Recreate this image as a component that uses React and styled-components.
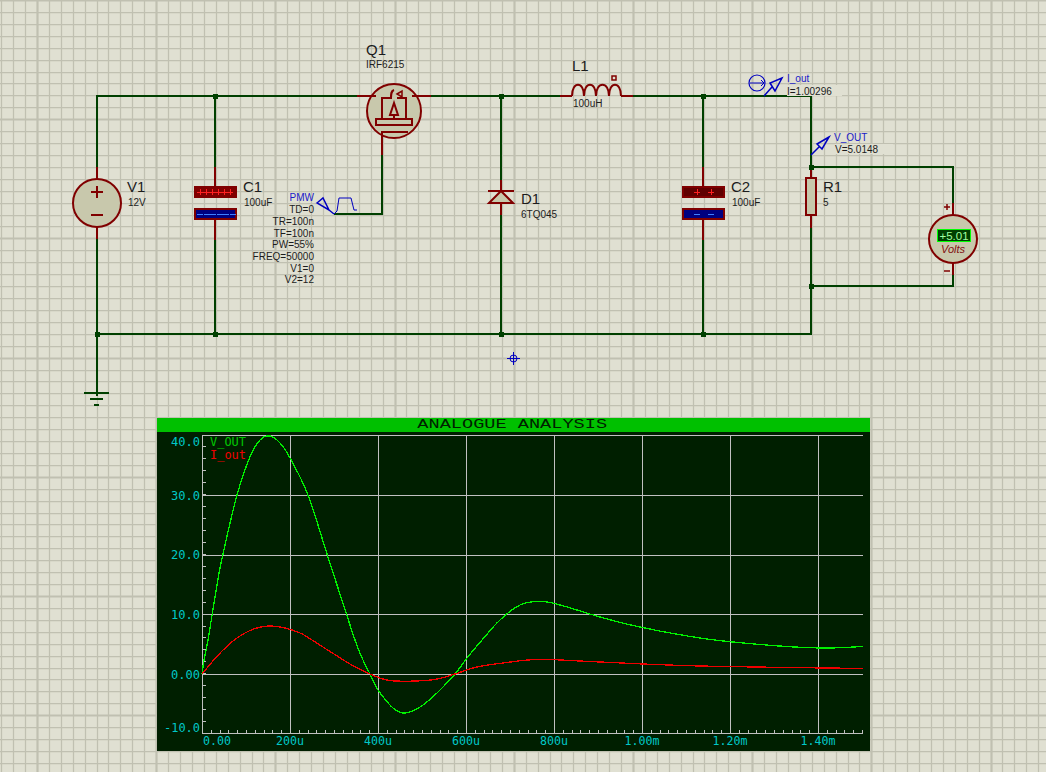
import React from 'react';
import styled, { createGlobalStyle } from 'styled-components';

const GlobalStyle = createGlobalStyle`
  html, body {
    margin: 0;
    padding: 0;
    background: #e0e0d2;
    overflow: hidden;
  }
`;

const Sheet = styled.div`
  position: relative;
  width: 1046px;
  height: 772px;
  overflow: hidden;
  background: #e0e0d2;
  font-family: 'Liberation Sans', Arial, sans-serif;
`;

const Schematic = styled.svg`
  display: block;
`;

const GridLine = styled.line`
  stroke: #c0c0b1;
  stroke-width: ${({ $major }) => ($major ? 2.2 : 1.25)};
`;

const Wire = styled.path`
  fill: none;
  stroke: #004000;
  stroke-width: 2;
  shape-rendering: crispEdges;
`;

const Junction = styled.rect`
  fill: #004000;
  width: 5px;
  height: 5px;
  shape-rendering: crispEdges;
`;

const Part = styled.path`
  fill: ${({ $fill }) => $fill || 'none'};
  stroke: #800000;
  stroke-width: ${({ $thin }) => ($thin ? 1.5 : 2)};
`;

const PartCircle = styled.circle`
  fill: #c8c8ac;
  stroke: #800000;
  stroke-width: 2;
`;

const Plate = styled.rect`
  fill: ${({ $fill }) => $fill};
  stroke: #800000;
  stroke-width: 2;
  shape-rendering: crispEdges;
`;

const PlateMark = styled.path`
  fill: none;
  stroke: ${({ $colour }) => $colour};
  stroke-width: 1;
  shape-rendering: crispEdges;
`;

const Probe = styled.path`
  fill: none;
  stroke: #0000c0;
  stroke-width: ${({ $thin }) => ($thin ? 1 : 1.5)};
`;

const Name = styled.text`
  font-family: 'Liberation Sans', Arial, sans-serif;
  font-size: 15px;
  fill: #1c1c1c;
`;

const Value = styled.text`
  font-family: 'Liberation Sans', Arial, sans-serif;
  font-size: 10px;
  fill: ${({ $blue }) => ($blue ? '#1a1ac8' : '#1c1c1c')};
  text-anchor: ${({ $end }) => ($end ? 'end' : 'start')};
`;

const Patch = styled.rect`
  fill: #e0e0d2;
`;

const MeterGlass = styled.rect`
  fill: #004000;
  stroke: #00ff00;
  stroke-width: 1;
  shape-rendering: crispEdges;
`;

const MeterText = styled.text`
  font-family: 'Liberation Sans', Arial, sans-serif;
  font-size: 11.5px;
  fill: #a0ffa0;
  text-anchor: middle;
`;

const MeterUnit = styled.text`
  font-family: 'Liberation Sans', Arial, sans-serif;
  font-size: 11px;
  font-style: italic;
  fill: #801010;
  text-anchor: middle;
`;

const GraphWindow = styled.section`
  position: absolute;
  left: 157px;
  top: 418px;
  width: 713px;
  height: 333px;
  display: flex;
  flex-direction: column;
  background: #001f00;
`;

const TitleBar = styled.header`
  height: 14px;
  background: #00c000;
  display: flex;
  align-items: center;
  justify-content: center;
  overflow: hidden;
`;

const Title = styled.span`
  font-family: 'Liberation Mono', monospace;
  font-size: 12px;
  line-height: 14px;
  color: #002000;
  white-space: nowrap;
  transform: translateX(-1px) scaleX(1.55);
`;

const Plot = styled.svg`
  display: block;
  flex: 1;
`;

const PlotRule = styled.line`
  stroke: #c0c0c0;
  stroke-width: 1;
  shape-rendering: crispEdges;
`;

const Trace = styled.polyline`
  fill: none;
  stroke: ${({ $colour }) => $colour};
  stroke-width: 1.3;
  shape-rendering: crispEdges;
`;

const AxisLabel = styled.text`
  font-family: 'DejaVu Sans Mono', monospace;
  font-size: 12.5px;
  fill: ${({ $colour }) => $colour || '#00c8c8'};
`;

// Sheet grid: 119.2px between heavy lines, ten minor cells to each
const CELL = 11.92;
const range = (count) => Array.from({ length: count }, (_, i) => i);

const wires = [
  'M97 167V96H357',
  'M431 96H560',
  'M633 96H811V178',
  'M97 239V396',
  'M97 334H811V228',
  'M215 96V167',
  'M215 239V334',
  'M501 96V180',
  'M501 215V334',
  'M703 96V167',
  'M703 240V334',
  'M811 167H953V203',
  'M953 275V286H811',
  'M382 155V214H334',
  'M84 393H109',
  'M90 399H103',
  'M94 405H99',
];

const junctions = [
  [215, 96], [501, 96], [703, 96], [97, 334], [215, 334], [501, 334], [703, 334], [811, 167], [811, 286],
];

const pmwLines = ['TD=0', 'TR=100n', 'TF=100n', 'PW=55%', 'FREQ=50000', 'V1=0', 'V2=12'];
const pmwBase = [213, 225, 237, 248, 260, 272, 283];

const plateMarks = (x, y, colour, count, step) => (
  <PlateMark
    $colour={colour}
    d={range(count).map((i) => `M${x + i * step - 3} ${y}h6`).join('')}
  />
);

const plusTicks = (x, y, count, step) => (
  <PlateMark
    $colour="#ff2020"
    d={range(count).map((i) => `M${x + i * step} ${y - 3}v6`).join('')}
  />
);

const Capacitor = ({ x, dark, plusCount, plusStep, plusX, minusCount, minusStep, minusX }) => (
  <g>
    <Part d={`M${x} 167V187M${x} 219V240`} />
    <Plate x={x - 20} y={187} width={41} height={10} $fill={dark ? '#600000' : '#800000'} />
    {plateMarks(plusX, 192, '#ff2020', plusCount, plusStep)}
    {plusTicks(plusX, 192, plusCount, plusStep)}
    <Plate x={x - 20} y={209} width={41} height={10} $fill="#000080" />
    {plateMarks(minusX, 214, '#4080ff', minusCount, minusStep)}
  </g>
);

const Mosfet = () => (
  <g>
    <PartCircle cx={394} cy={111} r={27} />
    <Part d="M357 96H376M412 96H431" />
    <Part d="M382 155V132H408" />
    <Part $fill="#c8c8ac" d="M376 119H412V125H376Z" />
    <Part d="M382 118V98H392M406 118V98H397" />
    <Part d="M391 98C391 94 391 91 394 90" />
    <Part $fill="#c8c8ac" d="M397 94L402 91V97Z" $thin />
    <Part $fill="#c8c8ac" d="M394 103L390 115H398Z" />
    <Part d="M394 115V119" />
  </g>
);

const Inductor = () => (
  <g>
    <Part d="M560 96H572M621 96H633" />
    <Part d="M572 96C572 81 584 81 584 96C584 81 596 81 596 96C596 81 609 81 609 96C609 81 621 81 621 96" />
    <Part $thin d="M612 76h4v4h-4z" />
  </g>
);

const Diode = () => (
  <g>
    <Part d="M501 180V191M501 203V215M488 191H514" />
    <Part $fill="#c8c8ac" d="M501 191L489 203H513Z" />
  </g>
);

const Resistor = () => (
  <g>
    <Part d="M811 170V178M811 215V228" />
    <Part $fill="#c8c8ac" d="M806 178H816V215H806Z" />
  </g>
);

const SourceV = () => (
  <g>
    <Part d="M97 167V179M97 227V239" />
    <PartCircle cx={97} cy={203} r={24} />
    <Part d="M91 192H103M97 186V198M91 215H103" />
  </g>
);

const Voltmeter = () => (
  <g>
    <Part d="M953 203V216M953 263V275" />
    <PartCircle cx={953} cy={239} r={24} />
    <Part $thin d="M944 207H950M947 204V210M944 271H950" />
    <MeterGlass x={937.5} y={229.5} width={33} height={12} />
    <MeterText x={954} y={240}>+5.01</MeterText>
    <MeterUnit x={953} y={253}>Volts</MeterUnit>
  </g>
);

const Probes = () => (
  <g>
    <Probe d="M317 203L323 198L329 210ZM329 210L334 214" />
    <Probe $thin d="M334 214L337 211L339 198H351L354 210H357" />
    <circle cx={757} cy={83} r={8} fill="none" stroke="#0000c0" strokeWidth={1.2} />
    <Probe $thin d="M750 83H764M761 80L764 83L761 86" />
    <Probe d="M782 78L770 83L775 91ZM764 96L772 87" />
    <Probe d="M829 137L817 144L822 149ZM811 155L820 146" />
    <circle cx={513.5} cy={358.5} r={3.5} fill="none" stroke="#0000c0" strokeWidth={1} />
    <Probe $thin d="M507 358.5H520M513.5 352V365" />
  </g>
);

const Drawing = () => (
  <Schematic width={1046} height={772} viewBox="0 0 1046 772">
    {range(90).map((i) => {
      const x = Math.round(1.2 + i * CELL) + 0.5;
      return <GridLine key={`v${i}`} x1={x} x2={x} y1={0} y2={772} $major={i % 10 === 3} />;
    })}
    {range(66).map((i) => {
      const y = Math.round(i * CELL) + 0.5;
      return <GridLine key={`h${i}`} x1={0} x2={1046} y1={y} y2={y} $major={i % 10 === 0} />;
    })}

    {wires.map((d) => <Wire key={d} d={d} />)}
    {junctions.map(([x, y]) => <Junction key={`${x}-${y}`} x={x - 2.5} y={y - 2.5} />)}

    <SourceV />
    <Capacitor x={215} plusCount={6} plusStep={6} plusX={200} minusCount={6} minusStep={6.5} minusX={200} />
    <Capacitor x={703} dark plusCount={2} plusStep={14} plusX={697} minusCount={2} minusStep={14} minusX={697} />
    <Mosfet />
    <Inductor />
    <Diode />
    <Resistor />
    <Voltmeter />

    <Patch x={787} y={85} width={55} height={11} />
    <Patch x={835} y={144} width={58} height={10} />
    <Probes />

    <Name x={366} y={55}>Q1</Name>
    <Value x={366} y={68}>IRF6215</Value>
    <Name x={127} y={192}>V1</Name>
    <Value x={128} y={206}>12V</Value>
    <Name x={243} y={192}>C1</Name>
    <Value x={244} y={206}>100uF</Value>
    <Name x={572} y={71}>L1</Name>
    <Value x={573} y={107}>100uH</Value>
    <Name x={521} y={204}>D1</Name>
    <Value x={521} y={218}>6TQ045</Value>
    <Name x={731} y={192}>C2</Name>
    <Value x={732} y={206}>100uF</Value>
    <Name x={823} y={192}>R1</Name>
    <Value x={823} y={206}>5</Value>

    <Value x={314} y={201} $end $blue>PMW</Value>
    {pmwLines.map((line, i) => (
      <Value key={line} x={314} y={pmwBase[i]} $end>{line}</Value>
    ))}

    <Value x={787} y={82} $blue>I_out</Value>
    <Value x={787} y={95}>I=1.00296</Value>
    <Value x={834} y={141} $blue>V_OUT</Value>
    <Value x={835} y={153}>V=5.0148</Value>
  </Schematic>
);

// Graph axes in page pixels
const X0 = 202;
const X1 = 863;
const Y_TOP = 435;
const Y_ZERO = 674;
const Y_BOTTOM = 733;
const X_STEP = 88;
const Y_STEP = 59.7;

const vOut = [
  [202, 674], [204, 660], [208, 640], [217, 585], [223, 554], [237, 495], [250, 457], [260, 440], [270, 436],
  [280, 443], [290, 458], [308, 495], [327, 554], [338, 588], [355, 640], [363, 660], [370, 674], [378, 690],
  [393, 708], [405, 713], [420, 707], [437, 693], [455, 674], [467, 658], [482, 640], [500, 620], [520, 605],
  [540, 601.5], [560, 605], [600, 617], [640, 627], [700, 638], [760, 644.5], [820, 648], [863, 646.5],
];

const iOut = [
  [202, 674], [212, 662], [222, 651], [233, 641], [245, 633], [257, 628], [270, 626], [285, 628], [300, 633],
  [312, 640], [350, 664], [370, 674], [383, 679], [395, 681], [417, 681], [437, 679], [455, 674], [477, 667],
  [503, 663], [540, 659.5], [600, 662], [700, 666], [863, 668.5],
];

// Catmull-Rom through the read-off points
const smooth = (points) => {
  const out = [];
  for (let i = 0; i < points.length - 1; i += 1) {
    const p0 = points[Math.max(i - 1, 0)];
    const p1 = points[i];
    const p2 = points[i + 1];
    const p3 = points[Math.min(i + 2, points.length - 1)];
    for (let s = 0; s < 6; s += 1) {
      const t = s / 6;
      const at = (k) => 0.5 * (2 * p1[k] + (p2[k] - p0[k]) * t
        + (2 * p0[k] - 5 * p1[k] + 4 * p2[k] - p3[k]) * t * t
        + (3 * p1[k] - p0[k] - 3 * p2[k] + p3[k]) * t * t * t);
      out.push(`${at(0).toFixed(1)},${at(1).toFixed(1)}`);
    }
  }
  const last = points[points.length - 1];
  out.push(`${last[0]},${last[1]}`);
  return out.join(' ');
};

const yLabels = [
  { text: '40.0', y: 446, x: 171 },
  { text: '30.0', y: 500, x: 171 },
  { text: '20.0', y: 559, x: 171 },
  { text: '10.0', y: 619, x: 171 },
  { text: '0.00', y: 679, x: 171 },
  { text: '-10.0', y: 732, x: 164 },
];

const xLabels = ['0.00', '200u', '400u', '600u', '800u', '1.00m', '1.20m', '1.40m'];

const Graph = () => (
  <GraphWindow>
    <TitleBar>
      <Title>ANALOGUE ANALYSIS</Title>
    </TitleBar>
    <Plot width={713} height={319} viewBox="157 432 713 319">
      {range(36).map((i) => {
        const y = Math.round(Y_BOTTOM - (i * Y_STEP) / 5);
        return <PlotRule key={`yt${i}`} x1={X0} x2={X0 + 4} y1={y} y2={y} />;
      })}
      {range(76).map((i) => {
        const x = Math.round(X0 + (i * X_STEP) / 10);
        return <PlotRule key={`xt${i}`} x1={x} x2={x} y1={Y_BOTTOM - 3} y2={Y_BOTTOM} />;
      })}
      {range(3).map((i) => {
        const y = Math.round(Y_ZERO - (i + 1) * Y_STEP);
        return <PlotRule key={`gy${i}`} x1={X0} x2={X1} y1={y} y2={y} />;
      })}
      <PlotRule x1={X0} x2={X1} y1={Y_ZERO} y2={Y_ZERO} />
      {range(7).map((i) => {
        const x = Math.round(X0 + (i + 1) * X_STEP);
        return <PlotRule key={`gx${i}`} x1={x} x2={x} y1={Y_TOP} y2={Y_BOTTOM} />;
      })}
      <PlotRule x1={X0} x2={X1} y1={Y_TOP} y2={Y_TOP} />
      <PlotRule x1={X0} x2={X1} y1={Y_BOTTOM} y2={Y_BOTTOM} />
      <PlotRule x1={X0} x2={X0} y1={Y_TOP} y2={Y_BOTTOM} />

      <Trace $colour="#00f000" points={smooth(vOut)} />
      <Trace $colour="#f00000" points={smooth(iOut)} />

      <AxisLabel $colour="#00c800" x={210} y={446} textLength={36} lengthAdjust="spacingAndGlyphs">V_OUT</AxisLabel>
      <AxisLabel $colour="#f00000" x={210} y={459} textLength={36} lengthAdjust="spacingAndGlyphs">I_out</AxisLabel>

      {yLabels.map(({ text, y, x }) => (
        <AxisLabel key={text} x={x} y={y} textLength={200 - x} lengthAdjust="spacingAndGlyphs">{text}</AxisLabel>
      ))}
      {xLabels.map((text, i) => {
        const wide = text.length === 5;
        const width = wide ? 35 : 28;
        const x = i === 0 ? 203 : X0 + i * X_STEP - width / 2;
        return (
          <AxisLabel key={text} x={x} y={745} textLength={width} lengthAdjust="spacingAndGlyphs">{text}</AxisLabel>
        );
      })}
    </Plot>
  </GraphWindow>
);

const App = () => (
  <Sheet>
    <GlobalStyle />
    <Drawing />
    <Graph />
  </Sheet>
);

export default App;
